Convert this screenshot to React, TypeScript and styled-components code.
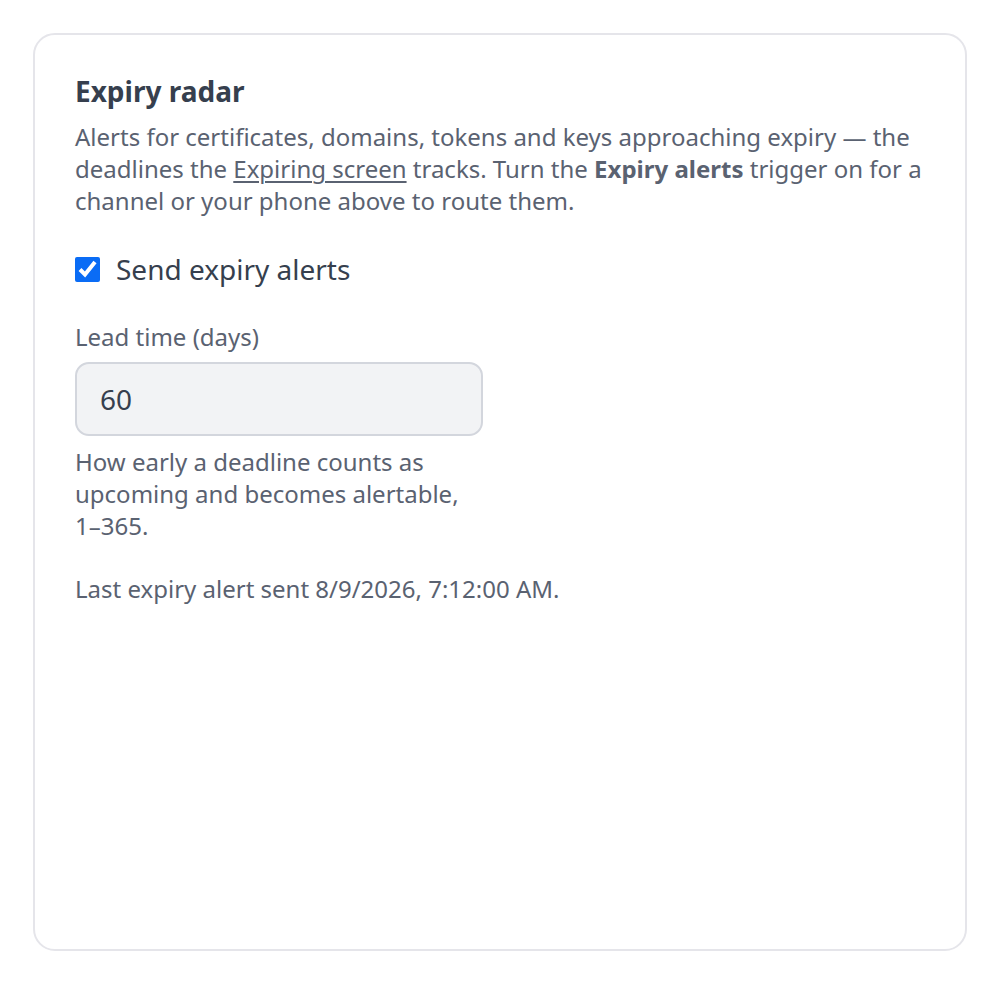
import React from "react";
import styled, { createGlobalStyle } from "styled-components";

const Global = createGlobalStyle`
  * { box-sizing: border-box; }
  html, body { margin: 0; padding: 0; background: #ffffff; }
  body { font-family: "Noto Sans", "Open Sans", sans-serif; }
`;

const Page = styled.div`
  padding: 33px;
  min-height: 100vh;
  display: flex;
`;

const Card = styled.section`
  flex: 1;
  border: 2px solid #e5e5ea;
  border-radius: 22px;
  padding: 38px 40px 40px;
  display: flex;
  flex-direction: column;
  align-items: flex-start;
  min-height: 917px;
`;

const Title = styled.h2`
  margin: 0;
  font-size: 28px;
  line-height: 36px;
  font-weight: 700;
  color: #363f4e;
`;

const Text = styled.p<{ $mt?: number }>`
  margin: ${(p) => p.$mt ?? 0}px 0 0;
  font-size: 24px;
  line-height: 32px;
  color: #5a6271;
`;

const Link = styled.a`
  color: inherit;
  text-decoration: underline;
  text-decoration-thickness: 1.5px;
  text-underline-offset: 3px;
`;

const CheckRow = styled.label`
  margin-top: 33px;
  display: flex;
  align-items: center;
  gap: 16px;
  font-size: 28px;
  line-height: 38px;
  color: #363f4e;
`;

const Check = styled.input`
  width: 25px;
  height: 25px;
  margin: 0;
  accent-color: #0a6cf5;
`;

const Field = styled.div`
  margin-top: 33px;
  width: 408px;
  display: flex;
  flex-direction: column;
`;

const FieldLabel = styled.label`
  font-size: 24px;
  line-height: 32px;
  color: #5a6271;
`;

const Input = styled.input`
  margin-top: 9px;
  height: 74px;
  border: 2px solid #d3d6dd;
  border-radius: 14px;
  background: #f2f3f5;
  padding: 0 23px;
  font-family: inherit;
  font-size: 28px;
  color: #363f4e;
  outline: none;
`;

const Help = styled.p`
  margin: 10px 0 0;
  font-size: 24px;
  line-height: 32px;
  color: #5a6271;
`;

export default function App() {
  return (
    <>
      <Global />
      <Page>
        <Card>
          <Title>Expiry radar</Title>
          <Text $mt={12}>
            Alerts for certificates, domains, tokens and keys approaching expiry — the
            deadlines the <Link href="#">Expiring screen</Link> tracks. Turn the{" "}
            <strong>Expiry alerts</strong> trigger on for a channel or your phone above to
            route them.
          </Text>
          <CheckRow>
            <Check type="checkbox" defaultChecked />
            Send expiry alerts
          </CheckRow>
          <Field>
            <FieldLabel htmlFor="lead">Lead time (days)</FieldLabel>
            <Input id="lead" type="text" defaultValue="60" />
            <Help>How early a deadline counts as upcoming and becomes alertable, 1–365.</Help>
          </Field>
          <Text $mt={31}>Last expiry alert sent 8/9/2026, 7:12:00 AM.</Text>
        </Card>
      </Page>
    </>
  );
}
